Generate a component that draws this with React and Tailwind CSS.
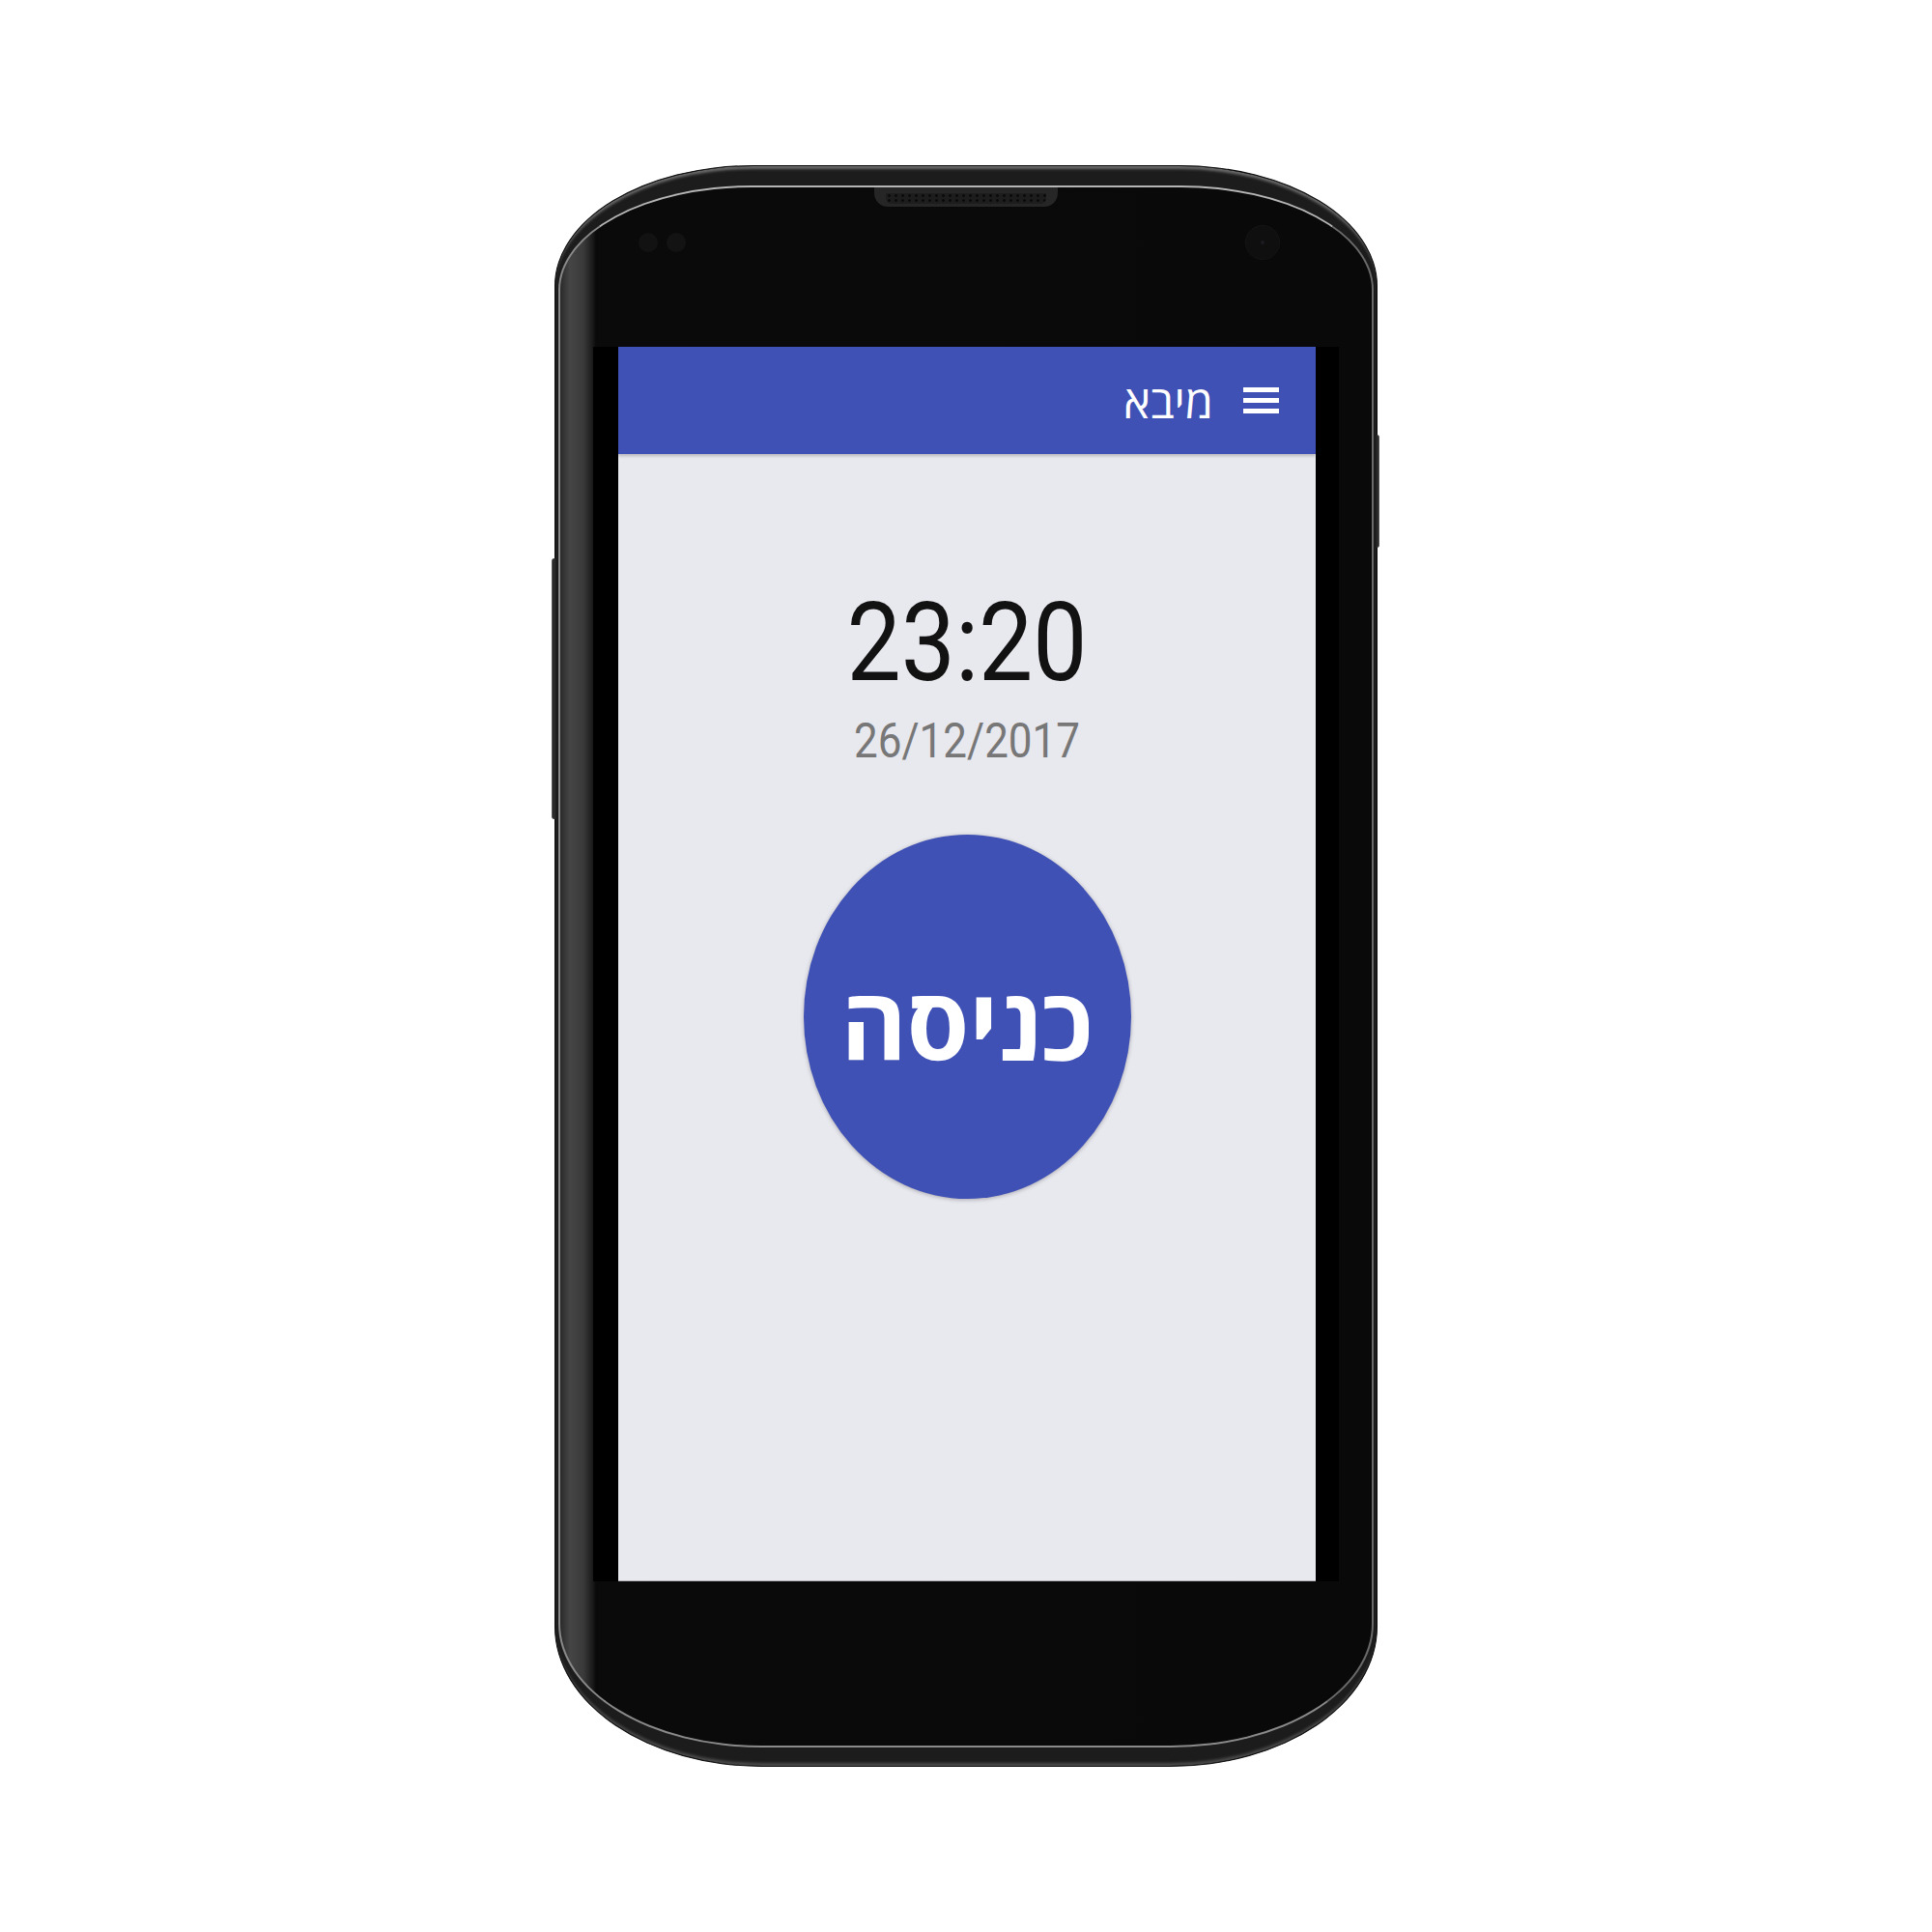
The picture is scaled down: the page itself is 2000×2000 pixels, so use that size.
import React from "react";

function Hamburger() {
  return (
    <div className="flex flex-col justify-between w-[37px] h-[27px]">
      <div className="h-[5px] bg-white" />
      <div className="h-[5px] bg-white" />
      <div className="h-[5px] bg-white" />
    </div>
  );
}

export default function App() {
  return (
    <div className="w-[2000px] h-[2000px] bg-white flex items-center justify-center">
      {/* phone body / rim */}
      <div className="relative w-[852px] h-[1658px] rounded-[205px_205px_215px_215px/125px_125px_145px_145px] bg-[#1c1c1c] border border-[#0c0c0c] shadow-[inset_0_5px_3px_-2px_#6a6a6a,inset_0_-5px_3px_-2px_#4a4a4a] pt-[20px] pb-[19px] pl-[3px] pr-[3px] flex">
        {/* side buttons */}
        <div className="absolute left-[-4px] top-[406px] w-[4px] h-[270px] rounded-l-[3px] bg-[#2a2a2a] border-l border-[#555]" />
        <div className="absolute right-[-3px] top-[278px] w-[3px] h-[117px] rounded-r-[3px] bg-[#2a2a2a] border-r border-[#555]" />

        {/* face */}
        <div className="flex-1 flex flex-col rounded-[200px_200px_210px_210px/108px_108px_128px_128px] border-2 border-[#8a8a8a] border-t-[#b5b5b5] border-r-[#6a6a6a] bg-[linear-gradient(to_right,#2a2a2a_0px,#454545_10px,#3a3a3a_24px,#181818_34px,#0a0a0a_37px,#090909_100%)] overflow-hidden">
          {/* top bezel */}
          <div className="h-[165px] flex flex-col items-center">
            <div className="mt-[-3px] w-[190px] h-[23px] rounded-b-[14px] bg-[#262626] border-t-[3px] border-[#7a7a7a] flex justify-center pt-[6px]">
              <div className="w-[166px] h-[11px] rounded-b-[6px] bg-[#1d1d1d] bg-[radial-gradient(circle,#0a0a0a_1.2px,transparent_1.6px)] bg-[length:7px_5px]" />
            </div>
            <div className="self-stretch flex items-center justify-between pl-[81px] pr-[95px] mt-[19px] h-[36px]">
              <div className="flex gap-[9px]">
                <div className="w-[20px] h-[20px] rounded-full bg-[#121212]" />
                <div className="w-[20px] h-[20px] rounded-full bg-[#131313]" />
              </div>
              <div className="w-[36px] h-[36px] rounded-full bg-[#0f0f10] border border-[#161618] flex items-center justify-center">
                <div className="w-[4px] h-[4px] rounded-full bg-[#1c1c20]" />
              </div>
            </div>
          </div>

          {/* display */}
          <div className="mx-[34px] h-[1278px] bg-black pl-[26px] pr-[24px] flex">
            <div className="flex-1 flex flex-col bg-[#e8e8ef] border-b border-[#b4b4b8]">
              {/* app bar */}
              <div dir="rtl" className="h-[111px] bg-[#3f51b5] shadow-[0_2px_3px_rgba(0,0,0,0.22)] flex items-center pr-[38px] gap-[31px]">
                <Hamburger />
                <div className="text-white text-[47px] leading-none font-['Open_Sans','Liberation_Sans',sans-serif] mt-[2px]">מיבא</div>
              </div>

              <div className="flex flex-col items-center">
                <div className="mt-[145px] h-[100px] text-[100px] leading-none text-[#121212] font-['Roboto',sans-serif] scale-y-[1.14]">23:20</div>
                <div className="mt-[30px] h-[44px] text-[44px] leading-none text-[#777777] font-['Roboto',sans-serif] scale-y-[1.14]">26/12/2017</div>
                <div className="mt-[75px] w-[339px] h-[377px] rounded-[50%] bg-[#3f51b5] shadow-[0_1px_4px_rgba(0,0,0,0.28)] flex items-center justify-center">
                  <div dir="rtl" className="text-white font-bold text-[104px] leading-none font-['Open_Sans','Liberation_Sans',sans-serif] mt-[10px]">כניסה</div>
                </div>
              </div>
            </div>
          </div>
        </div>
      </div>
    </div>
  );
}
